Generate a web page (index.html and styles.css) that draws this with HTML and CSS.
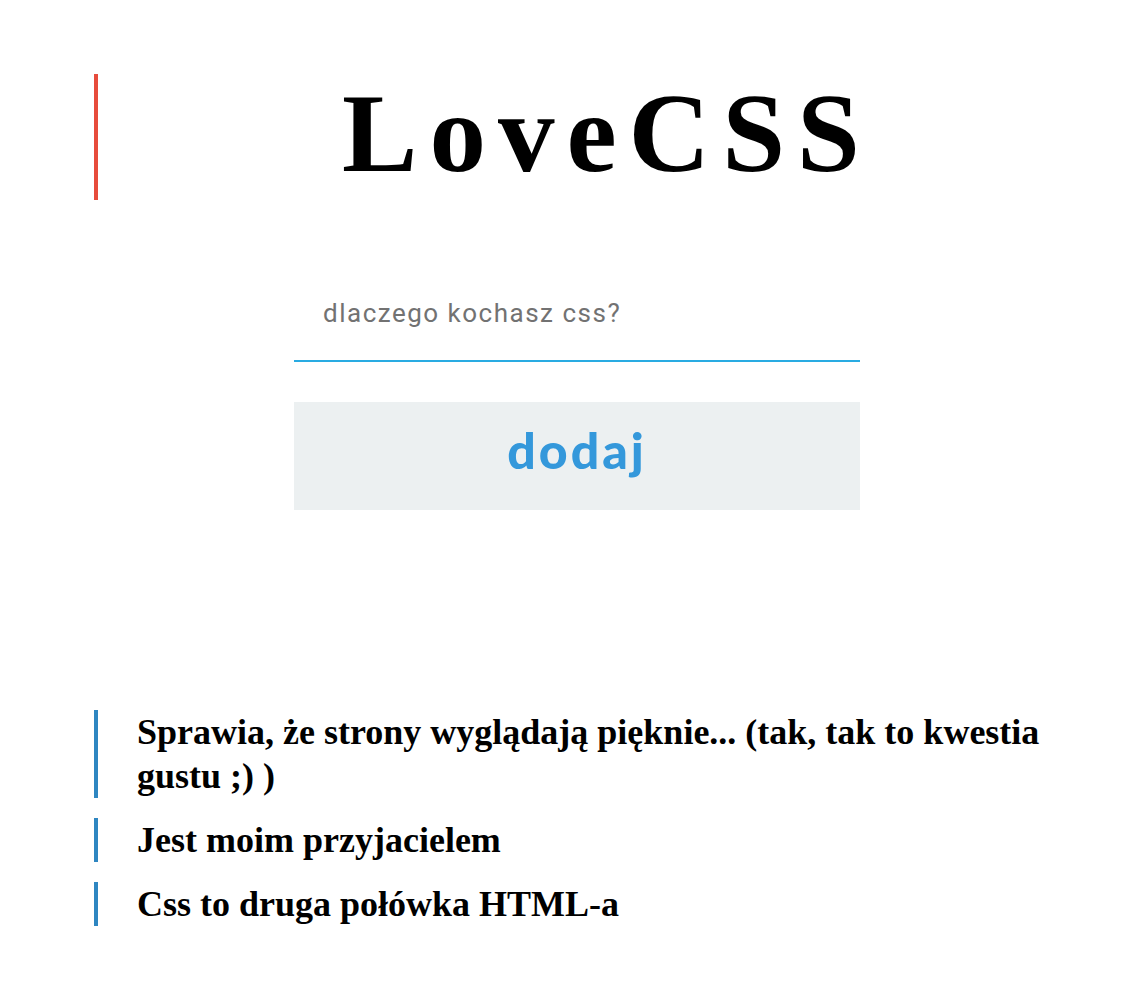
FILE: index.html
```html
<!DOCTYPE html>
<html lang="pl">
<head>
<meta charset="utf-8">
<title>LoveCSS</title>
<link rel="stylesheet" href="styles.css">
</head>
<body>
<header class="header">
  <h1 class="title">LoveCSS</h1>
</header>
<form class="form">
  <input class="field" type="text" placeholder="dlaczego kochasz css?">
  <button class="btn" type="button">dodaj</button>
</form>
<ul class="list">
  <li class="item">Sprawia, że strony wyglądają pięknie... (tak, tak to kwestia gustu ;) )</li>
  <li class="item">Jest moim przyjacielem</li>
  <li class="item">Css to druga połówka HTML-a</li>
</ul>
</body>
</html>
```
FILE: styles.css
```css
html, body {
  margin: 0;
  padding: 0;
  background: #fff;
}
body {
  padding-top: 74px;
  font-family: "Liberation Serif", "Times New Roman", serif;
  color: #000;
}
.header {
  margin: 0 38px 0 94px;
  border-left: 4px solid #e74c3c;
  padding-bottom: 8px;
}
.title {
  margin: 0;
  text-align: center;
  font-family: "Liberation Serif", "Times New Roman", serif;
  font-weight: bold;
  font-size: 113px;
  line-height: 118px;
  letter-spacing: 12px;
  padding-left: 8px;
}
.form {
  width: 566px;
  margin: 65px 0 0 294px;
  display: flex;
  flex-direction: column;
  gap: 40px;
}
.field {
  box-sizing: border-box;
  height: 97px;
  width: 100%;
  padding: 0 29px;
  border: none;
  border-bottom: 2px solid #29abe2;
  outline: none;
  font-family: Roboto, "Liberation Sans", sans-serif;
  font-size: 26px;
  letter-spacing: 1.5px;
  color: #333;
  background: #fff;
}
.field::placeholder {
  color: #727272;
}
.btn {
  box-sizing: border-box;
  height: 108px;
  width: 100%;
  padding: 0 0 12px;
  border: none;
  background: #ecf0f1;
  color: #3498db;
  font-family: Lato, "Liberation Sans", sans-serif;
  font-weight: 900;
  font-size: 50px;
  letter-spacing: 3px;
  cursor: pointer;
}
.list {
  list-style: none;
  margin: 200px 38px 0 94px;
  padding: 0;
  display: flex;
  flex-direction: column;
  gap: 20px;
}
.item {
  border-left: 4px solid #2e86c1;
  padding-left: 39px;
  font-weight: bold;
  font-size: 36px;
  line-height: 44px;
}
```
